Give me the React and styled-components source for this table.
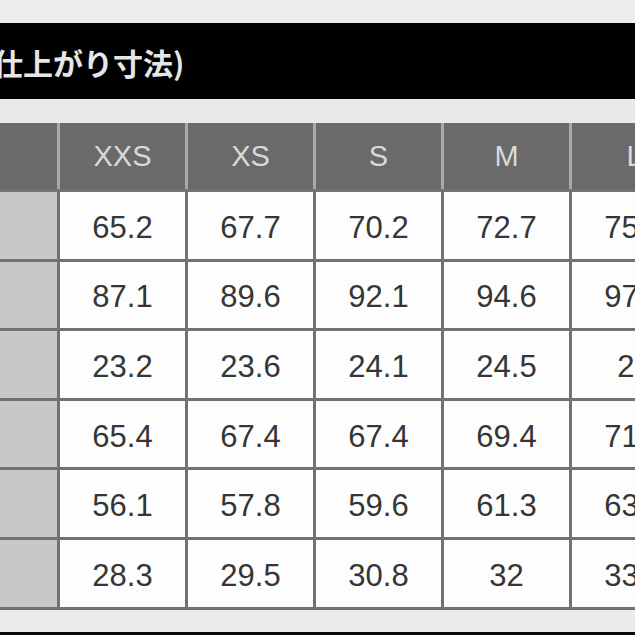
import React from "react";
import styled, { createGlobalStyle } from "styled-components";

const GlobalStyle = createGlobalStyle`
  html, body {
    margin: 0;
    padding: 0;
    background: #ebebeb;
    overflow: hidden;
  }
`;

// Data : sizes and measurements (cm)
const sizes = ["XXS", "XS", "S", "M", "L"];
const rows = [
  ["65.2", "67.7", "70.2", "72.7", "75.2"],
  ["87.1", "89.6", "92.1", "94.6", "97.1"],
  ["23.2", "23.6", "24.1", "24.5", "25"],
  ["65.4", "67.4", "67.4", "69.4", "71.4"],
  ["56.1", "57.8", "59.6", "61.3", "63.1"],
  ["28.3", "29.5", "30.8", "32", "33.5"],
];

const App = () => {
  return (
    <>
      <GlobalStyle />
      <Page>
        <TopStrip />
        <TitleBar>
          <Title>仕上がり寸法)</Title>
        </TitleBar>
        <Gap />
        <HeaderRow>
          <HeadCell />
          {sizes.map((s) => (
            <HeadCell key={s}>{s}</HeadCell>
          ))}
        </HeaderRow>
        <Body>
          {rows.map((row, i) => (
            <React.Fragment key={i}>
              <LabelCell />
              {row.map((v, j) => (
                <ValueCell key={j}>{v}</ValueCell>
              ))}
            </React.Fragment>
          ))}
        </Body>
        <BottomStrip />
        <BottomBar />
      </Page>
    </>
  );
};

export default App;

const Page = styled.div`
  width: 635px;
  height: 635px;
  overflow: hidden;
  display: flex;
  flex-direction: column;
  background: #ebebeb;
  font-family: "Liberation Sans", Arial, sans-serif;
`;

const TopStrip = styled.div`
  height: 23px;
  flex-shrink: 0;
  background: #ededed;
`;

const TitleBar = styled.div`
  height: 76px;
  flex-shrink: 0;
  background: #000;
  display: flex;
  align-items: center;
  overflow: hidden;
`;

const Title = styled.div`
  margin-left: -7px;
  margin-top: 2px;
  font-family: "Noto Sans CJK JP", sans-serif;
  font-size: 30px;
  font-weight: 700;
  color: #e6e6e6;
  white-space: nowrap;
`;

const Gap = styled.div`
  height: 24px;
  flex-shrink: 0;
  background: #e9e9e9;
`;

const COLUMNS = "57px repeat(5, 125px)";

const HeaderRow = styled.div`
  flex-shrink: 0;
  width: 700px;
  display: grid;
  grid-template-columns: ${COLUMNS};
  column-gap: 3px;
  background: #a9a9a9;
`;

const HeadCell = styled.div`
  height: 66px;
  background: #6a6a6a;
  color: #d9d9d9;
  font-size: 29px;
  display: flex;
  align-items: center;
  justify-content: center;
`;

const Body = styled.div`
  flex-shrink: 0;
  width: 700px;
  display: grid;
  grid-template-columns: ${COLUMNS};
  grid-auto-rows: 66.6px;
  gap: 3px;
  padding: 3px 0;
  background: #727272;
`;

const LabelCell = styled.div`
  background: #c8c8c8;
`;

const ValueCell = styled.div`
  background: #fdfdfd;
  color: #353535;
  font-size: 31px;
  display: flex;
  align-items: center;
  justify-content: center;
  padding-top: 5px;
`;

const BottomStrip = styled.div`
  height: 22px;
  flex-shrink: 0;
  background: #ebebeb;
`;

const BottomBar = styled.div`
  flex: 1;
  background: #0a0a0a;
`;
